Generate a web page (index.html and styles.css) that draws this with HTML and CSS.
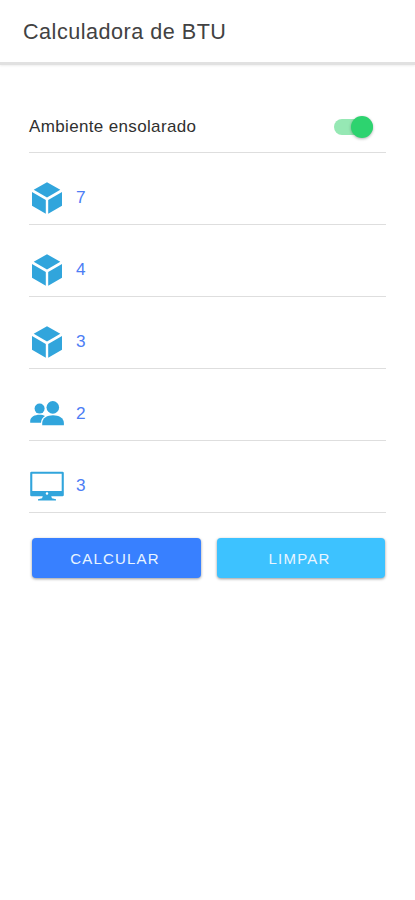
FILE: index.html
```html
<!DOCTYPE html>
<html lang="pt-BR">
<head>
<meta charset="utf-8">
<meta name="viewport" content="width=device-width, initial-scale=1">
<title>Calculadora de BTU</title>
<link rel="stylesheet" href="styles.css">
</head>
<body>
<svg class="defs" width="0" height="0" aria-hidden="true">
  <symbol id="cube" viewBox="0 0 34 34">
    <path d="M17 1.3 30.3 8.8 17 16.4 3.7 8.8Z M2 11 15.8 18.9V32.7L2 24.7Z M32 11 18.2 18.9V32.7L32 24.7Z"/>
  </symbol>
  <symbol id="people" viewBox="0 0 34 34">
    <circle cx="9.6" cy="11.6" r="5"/>
    <path d="M.2 25.8V23.8C.4 19.8 4.8 17.7 9.6 17.7 11.8 17.7 13.6 18.1 15 18.9 12.6 20.4 11.2 22.3 11 25.8Z"/>
    <circle cx="22.8" cy="10.4" r="6.3"/>
    <path d="M12.2 28.2V26C12.3 21 17.4 18.3 23 18.3S33.9 21 33.9 26V28.2Z"/>
  </symbol>
  <symbol id="monitor" viewBox="0 0 34 34">
    <path fill-rule="evenodd" d="M1.5 2.7H32.5Q33.8 2.7 33.8 4V25.9Q33.8 27.2 32.5 27.2H1.5Q.2 27.2 .2 25.9V4Q.2 2.7 1.5 2.7ZM2.3 4.8V21.9H31.7V4.8ZM17 23.2A1.3 1.3 0 1 0 17 25.8 1.3 1.3 0 1 0 17 23.2Z"/>
    <path d="M12.8 27H21.2L21.9 29.3 26 30.3V31.4H8V30.3L12.1 29.3Z"/>
  </symbol>
</svg>
<header class="header"><h1 class="title">Calculadora de BTU</h1></header>
<main class="content">
  <div class="row row-toggle">
    <span class="label">Ambiente ensolarado</span>
    <span class="toggle" role="switch" aria-checked="true"><span class="knob"></span></span>
  </div>
  <div class="row"><svg class="icon"><use href="#cube"/></svg><span class="value">7</span></div>
  <div class="row"><svg class="icon"><use href="#cube"/></svg><span class="value">4</span></div>
  <div class="row"><svg class="icon"><use href="#cube"/></svg><span class="value">3</span></div>
  <div class="row"><svg class="icon"><use href="#people"/></svg><span class="value">2</span></div>
  <div class="row"><svg class="icon"><use href="#monitor"/></svg><span class="value">3</span></div>
  <div class="actions">
    <button class="button primary">CALCULAR</button>
    <button class="button secondary">LIMPAR</button>
  </div>
</main>
</body>
</html>
```
FILE: styles.css
```css
* { box-sizing: border-box; }
body {
  margin: 0;
  min-height: 900px;
  background: #fff;
  color: #303030;
  font-family: "Liberation Sans", Arial, sans-serif;
}
.defs { display: block; }
.header {
  height: 62px;
  padding: 2px 23px 0;
  display: flex;
  align-items: center;
  background: #fff;
  box-shadow: 0 3px 0 #e1e1e1, 0 4px 2px #eee;
}
.title {
  margin: 0;
  font-size: 21.6px;
  font-weight: 400;
  line-height: 26px;
  letter-spacing: .5px;
  color: #424242;
}
.content { padding: 19px 29px 0; }
.row {
  height: 72px;
  padding: 18px 1px 0;
  display: flex;
  align-items: center;
  border-bottom: 1.5px solid #dedede;
}
.row-toggle {
  padding: 20px 13px 0 0;
  justify-content: space-between;
}
.label { font-size: 17px; letter-spacing: .35px; }
.toggle {
  width: 39px;
  height: 16px;
  display: flex;
  align-items: center;
  justify-content: flex-end;
  border-radius: 8px;
  background: #96e8b4;
}
.knob {
  width: 22px;
  height: 22px;
  flex: none;
  border-radius: 50%;
  background: #2dd36f;
  box-shadow: 0 1px 3px rgba(0, 0, 0, .3);
}
.icon {
  width: 34px;
  height: 34px;
  margin-right: 12px;
  fill: #31a5dc;
}
.value { font-size: 17.2px; color: #4c7df5; }
.actions {
  padding: 25px 2px 0 2.5px;
  display: grid;
  grid-template-columns: 169px 168px;
  gap: 16px;
}
.button {
  height: 40px;
  padding: 1px 2px 0 0;
  border: 0;
  border-radius: 4px;
  color: #e9f5ff;
  font: 400 15px "Liberation Sans", Arial, sans-serif;
  letter-spacing: 1.2px;
  box-shadow: 0 1px 3px rgba(0, 0, 0, .4);
}
.primary { background: #3880ff; }
.secondary { background: #3dc2ff; }
```
